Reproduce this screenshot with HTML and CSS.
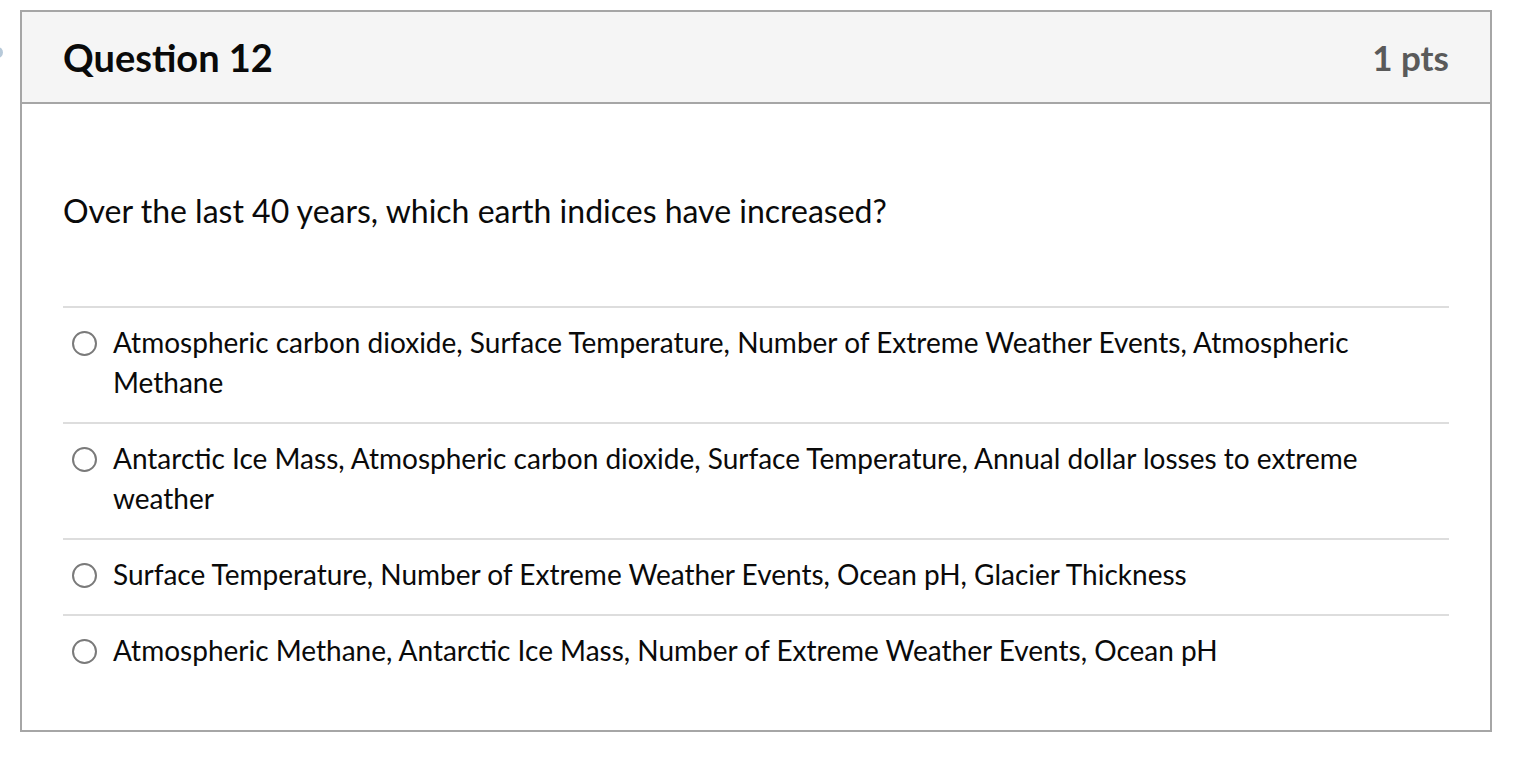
FILE: index.html
```html
<!DOCTYPE html>
<html>
<head>
<meta charset="utf-8">
<link rel="stylesheet" href="styles.css">
</head>
<body>
<div class="edge-dot"></div>
<div class="question">
  <div class="header">
    <h2 class="title">Question 12</h2>
    <span class="pts">1 pts</span>
  </div>
  <div class="body">
    <p class="text">Over the last 40 years, which earth indices have increased?</p>
    <div class="answers">
      <label class="answer">
        <span class="radio"></span>
        <span class="label">Atmospheric carbon dioxide, Surface Temperature, Number of Extreme Weather Events, Atmospheric Methane</span>
      </label>
      <label class="answer">
        <span class="radio"></span>
        <span class="label">Antarctic Ice Mass, Atmospheric carbon dioxide, Surface Temperature, Annual dollar losses to extreme weather</span>
      </label>
      <label class="answer">
        <span class="radio"></span>
        <span class="label">Surface Temperature, Number of Extreme Weather Events, Ocean pH, Glacier Thickness</span>
      </label>
      <label class="answer">
        <span class="radio"></span>
        <span class="label">Atmospheric Methane, Antarctic Ice Mass, Number of Extreme Weather Events, Ocean pH</span>
      </label>
    </div>
  </div>
</div>
</body>
</html>
```

FILE: styles.css
```css
html, body {
  margin: 0;
  padding: 0;
  background: #ffffff;
}
body {
  font-family: Lato, "Open Sans", sans-serif;
  color: #0a0a0a;
  padding: 10px 40px 0 20px;
  position: relative;
}
.edge-dot {
  position: absolute;
  left: -8px;
  top: 47px;
  width: 11px;
  height: 11px;
  border-radius: 50%;
  background: #b7c9d9;
}
.question {
  width: 1468px;
  border: 2px solid #a6a6a6;
  box-sizing: content-box;
}
.header {
  display: flex;
  align-items: center;
  justify-content: space-between;
  height: 90px;
  padding: 0 41px;
  background: #f5f5f5;
  border-bottom: 2px solid #a6a6a6;
}
.title {
  margin: 0;
  font-size: 38px;
  font-weight: 700;
  color: #0a0a0a;
}
.pts {
  font-size: 35px;
  font-weight: 700;
  color: #5a5a5a;
}
.body {
  padding: 87px 41px 40px 41px;
}
.text {
  margin: 0 0 75px 0;
  font-size: 32px;
  line-height: 40px;
}
.answer {
  display: flex;
  align-items: flex-start;
  gap: 16px;
  border-top: 2px solid #dddddd;
  padding: 14px 0 20px 9px;
}
.radio {
  flex: none;
  width: 21px;
  height: 21px;
  margin-top: 9px;
  border: 2px solid #7a7a7a;
  border-radius: 50%;
}
.label {
  font-size: 28px;
  line-height: 40px;
  color: #0a0a0a;
}
```
